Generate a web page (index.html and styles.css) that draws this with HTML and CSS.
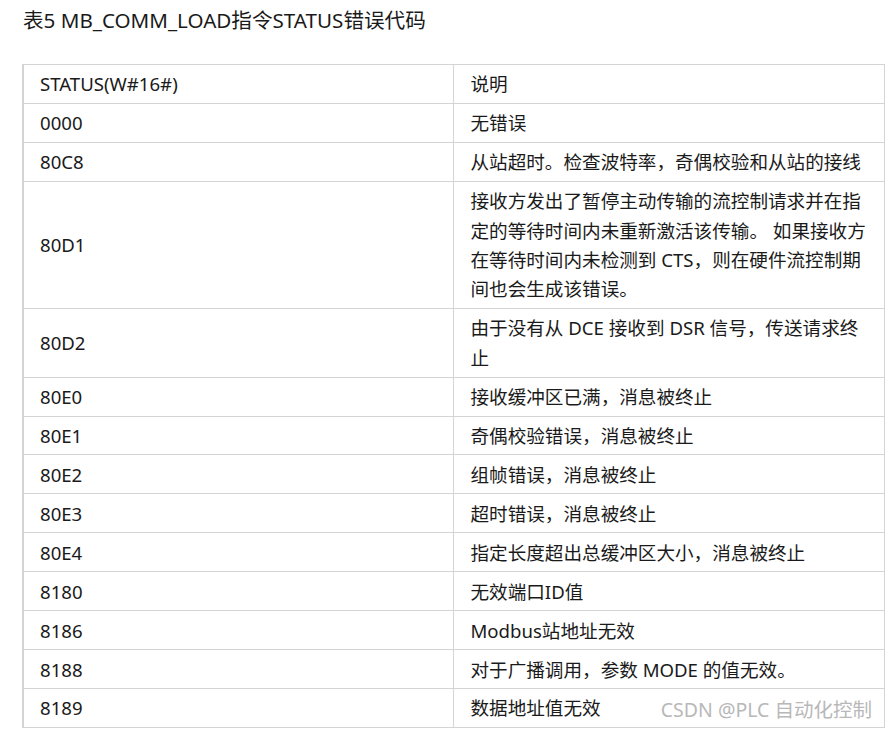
FILE: index.html
```html
<!DOCTYPE html>
<html lang="zh-CN">
<head>
<meta charset="utf-8">
<title>表5 MB_COMM_LOAD指令STATUS错误代码</title>
<link rel="stylesheet" href="styles.css">
</head>
<body>
<div class="page">
  <p class="caption">表5 MB_COMM_LOAD指令STATUS错误代码</p>
  <table class="codes">
    <tbody>
      <tr><td>STATUS(W#16#)</td><td>说明</td></tr>
      <tr><td>0000</td><td>无错误</td></tr>
      <tr><td>80C8</td><td>从站超时。检查波特率，奇偶校验和从站的接线</td></tr>
      <tr><td>80D1</td><td>接收方发出了暂停主动传输的流控制请求并在指定的等待时间内未重新激活该传输。 如果接收方在等待时间内未检测到 CTS，则在硬件流控制期间也会生成该错误。</td></tr>
      <tr><td>80D2</td><td>由于没有从 DCE 接收到 DSR 信号，传送请求终止</td></tr>
      <tr><td>80E0</td><td>接收缓冲区已满，消息被终止</td></tr>
      <tr><td>80E1</td><td>奇偶校验错误，消息被终止</td></tr>
      <tr><td>80E2</td><td>组帧错误，消息被终止</td></tr>
      <tr><td>80E3</td><td>超时错误，消息被终止</td></tr>
      <tr><td>80E4</td><td>指定长度超出总缓冲区大小，消息被终止</td></tr>
      <tr><td>8180</td><td>无效端口ID值</td></tr>
      <tr><td>8186</td><td>Modbus站地址无效</td></tr>
      <tr><td>8188</td><td>对于广播调用，参数 MODE 的值无效。</td></tr>
      <tr><td>8189</td><td>数据地址值无效</td></tr>
    </tbody>
  </table>
  <div class="watermark">CSDN @PLC 自动化控制</div>
</div>
</body>
</html>
```

FILE: styles.css
```css
html, body {
  margin: 0;
  padding: 0;
  background: #ffffff;
}

body {
  font-family: "Noto Sans", "Noto Sans CJK SC", sans-serif;
  color: #1a1a1a;
  font-size: 18.6px;
  line-height: 29.45px;
}

.page {
  position: relative;
  width: 886px;
  height: 729px;
  overflow: hidden;
}

.caption {
  margin: 0;
  padding: 6px 0 0 23px;
  height: 64px;
  box-sizing: border-box;
  font-size: 20.6px;
}

.codes {
  margin-left: 22px;
  width: 863px;
  border-collapse: collapse;
  table-layout: fixed;
}

.codes td {
  border: 1px solid #d4d4d4;
  padding: 4.25px 16px;
  vertical-align: middle;
  width: 50%;
}

.codes td:first-child {
  border-left: 2px solid #d4d4d4;
}

.watermark {
  position: absolute;
  right: 14px;
  bottom: 8px;
  font-size: 19.5px;
  color: #b8b8b8;
  line-height: 1.2;
}
```
